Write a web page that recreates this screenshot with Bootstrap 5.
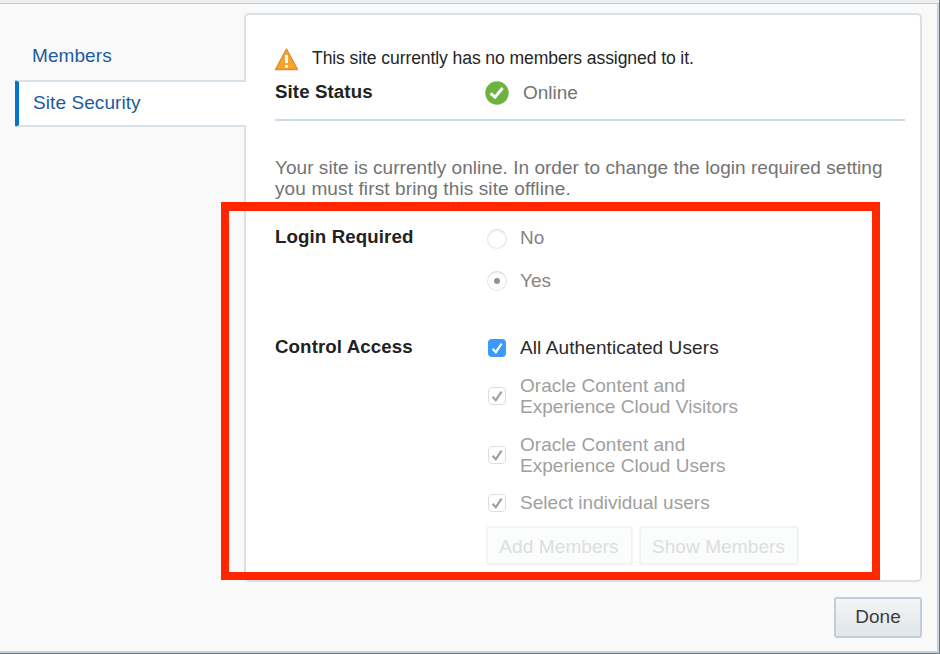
<!DOCTYPE html>
<html lang="en">
<head>
<meta charset="utf-8">
<meta name="viewport" content="width=device-width, initial-scale=1">
<title>Site Security</title>
<link href="https://cdn.jsdelivr.net/npm/bootstrap@5.3.0/dist/css/bootstrap.min.css" rel="stylesheet">
<style>
body{font-family:"Liberation Sans",Arial,sans-serif;font-size:19px;line-height:22px;color:#262626;background:#f9f9f9;width:940px;height:654px}
.dialog{height:650px;background:#f9f9f9;border-top:1px solid #bfc9d0;border-right:2px solid #c8d3db;border-bottom:2px solid #c6d0d7}
.strip{height:3px;background:#edeef0}
.shell{height:654px;background:#6f7780;padding:0 1px 1px 0}
.side{width:229px;margin-left:15px;padding-top:36px;z-index:1}
.side .nav-link{color:#1c5c9e;padding:0 0 0 17px;height:40px;line-height:31px;letter-spacing:.08px}
.side .nav-link.active{width:231px;height:47px;line-height:41px;padding-left:14px;background:#fff;border:2px solid #d8e1e8;border-left:4px solid #0572ce;border-right:0;border-radius:2px 0 0 2px}
.panel{width:678px;height:569px;margin-top:9px;border:2px solid #d8e1e8;border-radius:5px;padding:32px 15px 0 29px}
.warn{height:21px;font-size:17.6px;letter-spacing:-.11px}
.warn svg{margin:2px 13px 0 -1px}
.status{height:53px;padding-bottom:1px;border-bottom:2px solid #cddbe8}
.caption-col{width:211px;font-weight:700;font-size:18.7px;letter-spacing:.1px;color:#222}
.status .caption-col{padding-bottom:2px;width:210px}
.soft{color:#737373;padding-left:14px;letter-spacing:-.04px}
.note{margin:37px 0 0;line-height:20.5px;color:#737373;white-space:nowrap}
.note .n1{letter-spacing:.04px}
.note .n2{letter-spacing:.12px}
.login{margin-top:18px}
.login .caption-col{padding-top:9px}
.choice{height:42.5px;color:#858585}
.choice .dot,.access .tick{flex:none}
.dot{width:20px;height:20px;border:1px solid #e5e5e5;border-top-color:#d9d9d9;border-radius:50%;box-shadow:inset 0 1px 2px #eee;margin:1px 13px 0 1px}
.dot.on::after{content:"";width:6px;height:6px;border-radius:50%;background:#929292}
.access{margin-top:35px}
.access .caption-col{margin-top:-1px}
.access .opts{gap:16.8px;color:#a0a0a0;line-height:21px;letter-spacing:.03px}
.access .first{color:#2b2b2b;letter-spacing:.1px}
.tick{width:18px;height:18px;margin:0 14.5px 0 1.5px}
.actions{gap:6px;margin:13px 0 0 -.5px}
.ghost,.ghost:disabled{height:39px;font-size:19px;padding:2px 0 0;border-radius:3px;line-height:1;letter-spacing:.1px;color:#dcdede;background:#fbfcfc;border:2px solid #f1f4f6;opacity:1}
.w-add{width:147px}.w-show{width:160px}
.done,.done:hover{width:88px;height:41px;margin:15px 15px 0 0;border:2px solid #c1ceda;border-radius:3px;background:linear-gradient(#f3f5f6,#e1e6e9);color:#3d3d3d;font-size:19px;padding:0}
.highlight{left:221px;top:202px;width:659px;height:378px;border:8.5px solid #ff2600;border-top-width:9px;z-index:5;pointer-events:none}
</style>
</head>
<body class="position-relative overflow-hidden">
<svg class="d-none"><symbol id="check" viewBox="0 0 18 18"><path d="M4.6 9.8 7.8 13.2 13.6 4.6" fill="none" stroke="currentColor" stroke-width="2.2"/></symbol></svg>
<div class="shell">
  <div class="strip"></div>
  <main class="dialog">
    <div class="d-flex">
      <nav class="nav flex-column flex-nowrap side">
        <a class="nav-link" href="#">Members</a>
        <a class="nav-link active" href="#">Site Security</a>
      </nav>
      <section class="panel bg-white">
        <div class="warn d-flex align-items-center">
          <svg width="25" height="24" viewBox="0 0 25 24"><path d="M12.5 2 23.5 22.5H1.5Z" fill="#f9a12e" stroke="#d98e32" stroke-width="1.4" stroke-linejoin="round"/><path d="M12.5 8v8M12.5 18v2.8" stroke="#fff" stroke-width="3"/></svg>
          <span>This site currently has no members assigned to it.</span>
        </div>
        <div class="status d-flex align-items-center">
          <div class="caption-col">Site Status</div>
          <svg width="24" height="24" viewBox="0 0 24 24"><circle cx="12" cy="12" r="11.7" fill="#6cb33f"/><path d="M5.6 12.3 10 16.2 17.6 7" fill="none" stroke="#fff" stroke-width="3"/></svg>
          <span class="soft">Online</span>
        </div>
        <p class="note"><span class="n1">Your site is currently online. In order to change the login required setting</span><br><span class="n2">you must first bring this site offline.</span></p>
        <div class="login d-flex">
          <div class="caption-col">Login Required</div>
          <div>
            <div class="choice d-flex align-items-center"><span class="dot"></span>No</div>
            <div class="choice d-flex align-items-center"><span class="dot on d-flex align-items-center justify-content-center"></span>Yes</div>
          </div>
        </div>
        <div class="access d-flex">
          <div class="caption-col">Control Access</div>
          <div>
            <div class="opts d-flex flex-column">
              <div class="first d-flex align-items-center"><svg class="tick text-white"><rect width="18" height="18" rx="4" fill="#3b99fc"/><use href="#check"/></svg><span>All Authenticated Users</span></div>
              <div class="d-flex align-items-center"><svg class="tick"><rect x=".5" y=".5" width="17" height="17" rx="3.5" fill="#fff" stroke="#dedede"/><use href="#check"/></svg><span>Oracle Content and<br>Experience Cloud Visitors</span></div>
              <div class="d-flex align-items-center"><svg class="tick"><rect x=".5" y=".5" width="17" height="17" rx="3.5" fill="#fff" stroke="#dedede"/><use href="#check"/></svg><span>Oracle Content and<br>Experience Cloud Users</span></div>
              <div class="d-flex align-items-center"><svg class="tick"><rect x=".5" y=".5" width="17" height="17" rx="3.5" fill="#fff" stroke="#dedede"/><use href="#check"/></svg><span>Select individual users</span></div>
            </div>
            <div class="actions d-flex">
              <button class="btn ghost w-add" disabled>Add Members</button>
              <button class="btn ghost w-show" disabled>Show Members</button>
            </div>
          </div>
        </div>
      </section>
    </div>
    <div class="d-flex justify-content-end"><button class="btn done">Done</button></div>
  </main>
</div>
<div class="highlight position-absolute"></div>
</body>
</html>
